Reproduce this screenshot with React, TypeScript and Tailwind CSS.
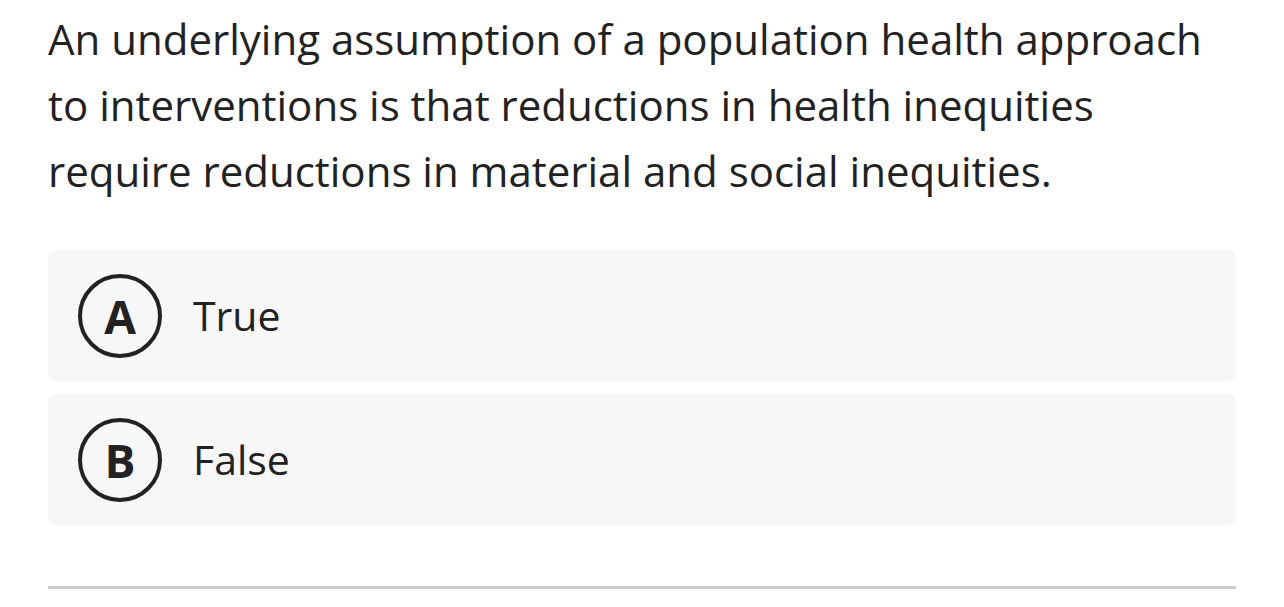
import React from "react";

const options = [
  { letter: "A", label: "True" },
  { letter: "B", label: "False" },
];

export default function App() {
  return (
    <div
      className="w-[1284px] h-[607px] bg-white px-[48px] pt-[6px] text-[#222222]"
      style={{ fontFamily: '"Open Sans", "Noto Sans", sans-serif' }}
    >
      <p className="text-[42px] leading-[66px] m-0">
        An underlying assumption of a population health approach to interventions is that reductions in health inequities require reductions in material and social inequities.
      </p>
      <div className="mt-[46px] flex flex-col gap-[13px]">
        {options.map((o) => (
          <div
            key={o.letter}
            className="h-[131px] rounded-[8px] bg-[#f7f7f7] flex items-center pl-[30px]"
          >
            <div className="w-[84px] h-[84px] rounded-full border-[4.5px] border-[#222222] flex items-center justify-center shrink-0">
              <span className="text-[46px] font-bold leading-none">{o.letter}</span>
            </div>
            <span className="ml-[31px] text-[41px] leading-none">{o.label}</span>
          </div>
        ))}
      </div>
      <div className="mt-[61px] h-[3px] bg-[#cccccc]" />
    </div>
  );
}
